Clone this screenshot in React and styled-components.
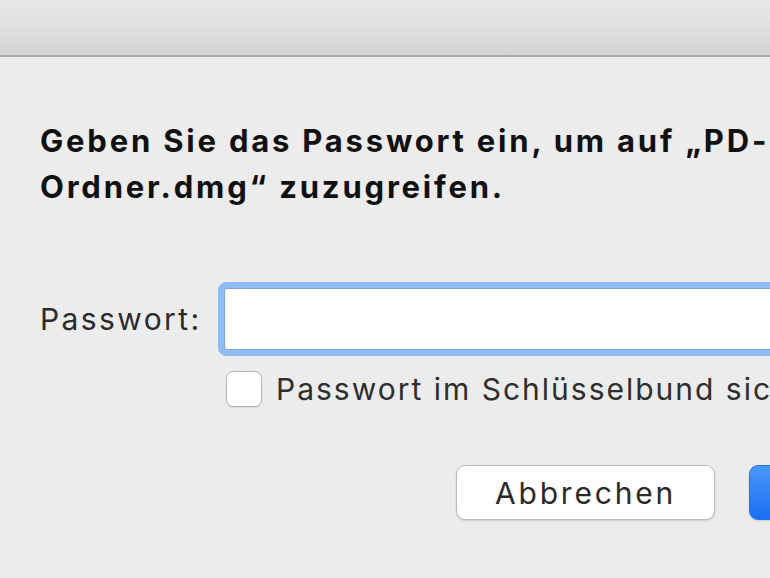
import React from 'react';
import styled, { createGlobalStyle } from 'styled-components';

const GlobalStyle = createGlobalStyle`
  html, body {
    margin: 0;
    padding: 0;
    background: #ececec;
    overflow: hidden;
  }
  body {
    font-family: Inter, "Liberation Sans", Arial, sans-serif;
    color: #262626;
  }
`;

const App = () => {
  return (
    <>
      <GlobalStyle />
      <Window>
        <TitleBar />
        <Dialog>
          <Message>
            Geben Sie das Passwort ein, um auf „PD-
            <br />
            Ordner.dmg“ zuzugreifen.
          </Message>

          <FormRow>
            <Label htmlFor="pw">Passwort:</Label>
            <PasswordInput id="pw" type="password" />
          </FormRow>

          <CheckRow>
            <CheckBox />
            <CheckLabel>Passwort im Schlüsselbund sichern</CheckLabel>
          </CheckRow>

          <ButtonRow>
            <Button>Abbrechen</Button>
            <Button $primary>Öffnen</Button>
          </ButtonRow>
        </Dialog>
      </Window>
    </>
  );
};

const Window = styled.div`
  width: 1048px;
  height: 578px;
  display: flex;
  flex-direction: column;
  background: #ececec;
`;

const TitleBar = styled.div`
  height: 55px;
  flex-shrink: 0;
  background: linear-gradient(to bottom, #e7e6e9 0%, #e3e2e5 35%, #d3d2d5 100%);
  border-bottom: 2px solid #a8a8aa;
  box-shadow: 0 1px 0 #e9efe9;
`;

const Dialog = styled.div`
  display: flex;
  flex-direction: column;
  padding: 0 40px;
`;

const Message = styled.p`
  margin: 61px 0 0;
  font-size: 31px;
  line-height: 46px;
  font-weight: 700;
  color: #111;
  letter-spacing: 2.8px;
  white-space: nowrap;
`;

const FormRow = styled.div`
  display: flex;
  align-items: center;
  gap: 15px;
  margin-top: 72px;
`;

const Label = styled.label`
  font-size: 30px;
  color: #2b2b2b;
  letter-spacing: 2.4px;
  width: 163px;
  white-space: nowrap;
`;

const PasswordInput = styled.input`
  flex: 1;
  height: 62px;
  box-sizing: border-box;
  border: 1px solid #7ea6d8;
  border-radius: 3px;
  background: #fff;
  outline: none;
  box-shadow: 0 0 0 6px #8dbdf3;
  margin: 6px 0 6px 6px;
`;

const CheckRow = styled.div`
  display: flex;
  align-items: center;
  gap: 14px;
  margin-top: 15px;
  margin-left: 186px;
`;

const CheckBox = styled.span`
  width: 36px;
  height: 36px;
  box-sizing: border-box;
  background: #fff;
  border: 1.5px solid #b4b4b4;
  border-radius: 7px;
  box-shadow: 0 1px 1px rgba(0, 0, 0, 0.08);
  flex-shrink: 0;
`;

const CheckLabel = styled.span`
  font-size: 30px;
  color: #2e2e2e;
  letter-spacing: 2px;
  white-space: nowrap;
`;

const ButtonRow = styled.div`
  display: flex;
  justify-content: flex-end;
  gap: 34px;
  margin-top: 58px;
`;

const Button = styled.button`
  width: 259px;
  height: 55px;
  border-radius: 9px;
  font-family: Inter, "Liberation Sans", Arial, sans-serif;
  font-size: 30px;
  letter-spacing: 2.8px;
  cursor: pointer;
  color: ${(p) => (p.$primary ? '#fff' : '#2a2a2a')};
  background: ${(p) =>
    p.$primary ? 'linear-gradient(to bottom, #4a97f9, #1a6ff5)' : '#fff'};
  border: ${(p) => (p.$primary ? '1px solid #2a72e8' : '1.5px solid #bdbdbd')};
  box-shadow: 0 1px 2px rgba(0, 0, 0, 0.15);
`;

export default App;
